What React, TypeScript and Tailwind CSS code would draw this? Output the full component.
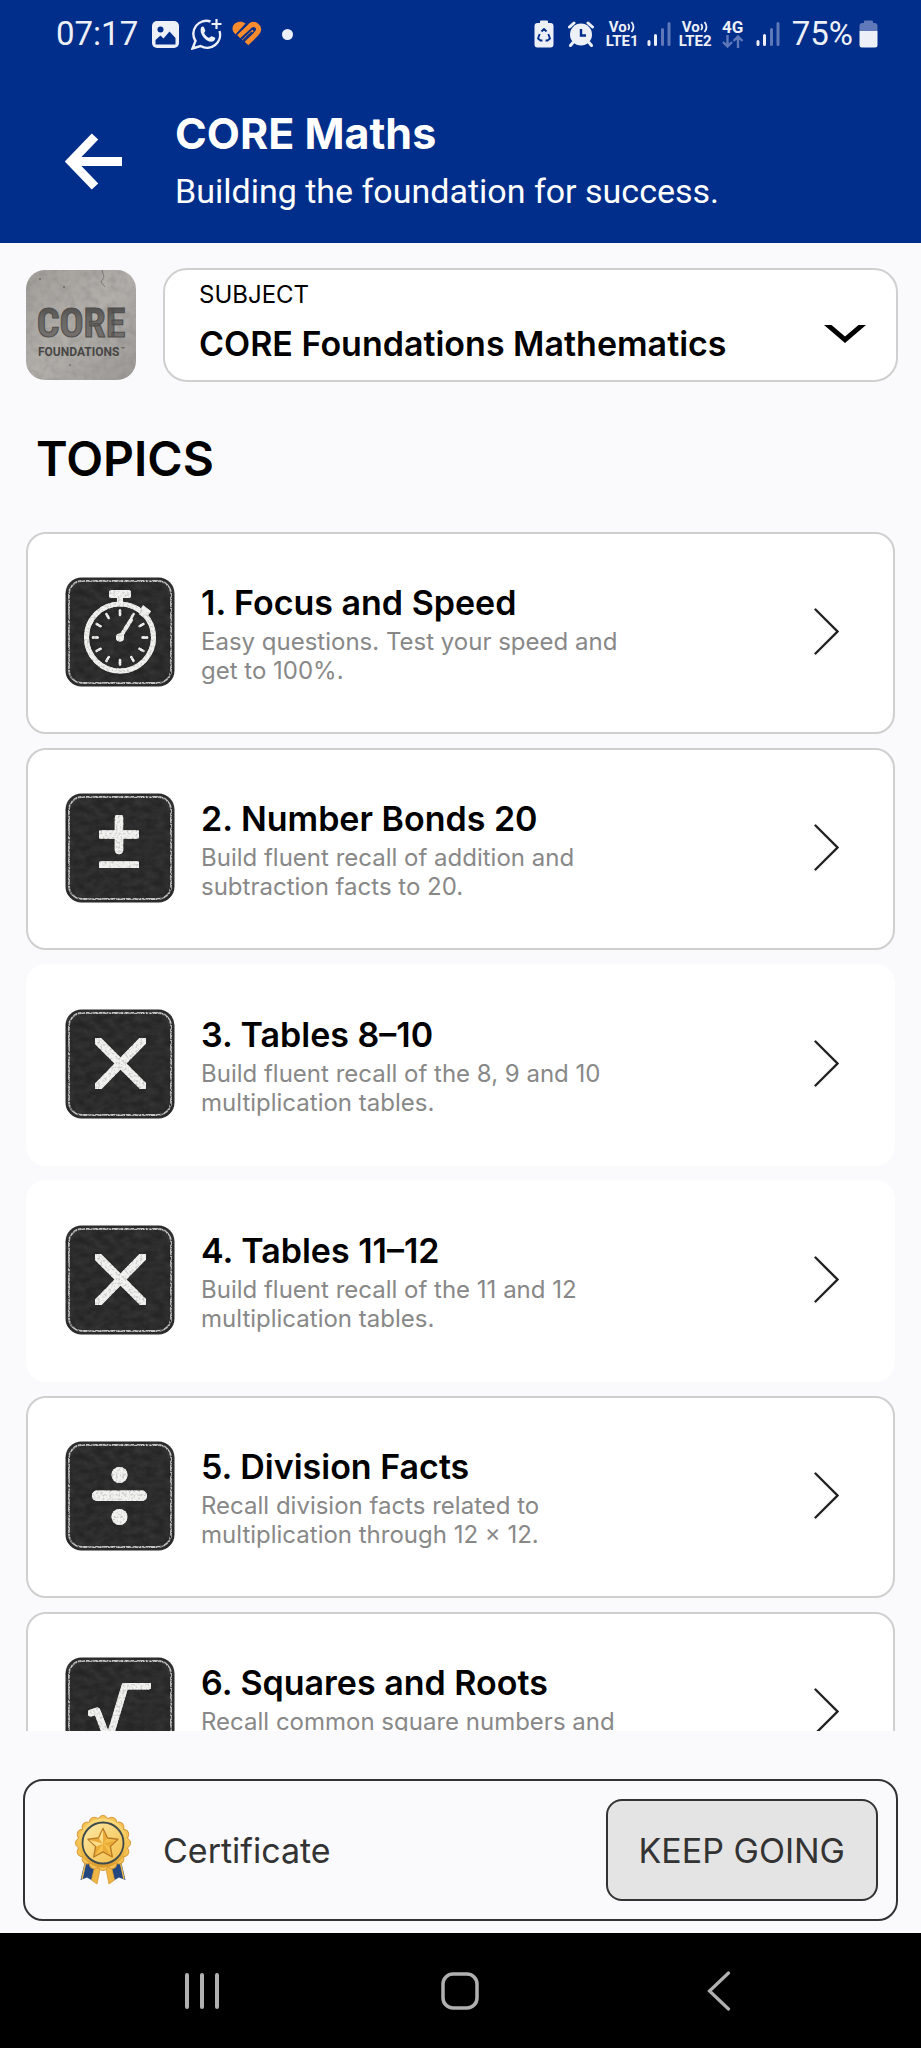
import React from "react";

type IconName = "stopwatch" | "plusminus" | "times" | "divide" | "root";

interface Topic {
  title: string;
  text: string;
  icon: IconName;
  outlined: boolean;
}

const topics: Topic[] = [
  { title: "1. Focus and Speed", text: "Easy questions. Test your speed and get to 100%.", icon: "stopwatch", outlined: true },
  { title: "2. Number Bonds 20", text: "Build fluent recall of addition and subtraction facts to 20.", icon: "plusminus", outlined: true },
  { title: "3. Tables 8–10", text: "Build fluent recall of the 8, 9 and 10 multiplication tables.", icon: "times", outlined: false },
  { title: "4. Tables 11–12", text: "Build fluent recall of the 11 and 12 multiplication tables.", icon: "times", outlined: false },
  { title: "5. Division Facts", text: "Recall division facts related to multiplication through 12 × 12.", icon: "divide", outlined: true },
  { title: "6. Squares and Roots", text: "Recall common square numbers and", icon: "root", outlined: true },
];

/* Shared filters: chalk grain, slate grain and concrete grain */
function Filters() {
  return (
    <svg className="absolute size-0" aria-hidden="true">
      <defs>
        <filter id="chalk" x="-5%" y="-5%" width="110%" height="110%">
          <feTurbulence type="fractalNoise" baseFrequency="0.45" numOctaves="2" seed="4" result="n" />
          <feColorMatrix in="n" type="matrix" values="0 0 0 0 0  0 0 0 0 0  0 0 0 0 0  0 0 0 -4 2.9" result="m" />
          <feComposite in="SourceGraphic" in2="m" operator="in" result="c" />
          <feComponentTransfer in="SourceGraphic" result="base">
            <feFuncA type="linear" slope="0.82" />
          </feComponentTransfer>
          <feMerge>
            <feMergeNode in="base" />
            <feMergeNode in="c" />
          </feMerge>
        </filter>
        <filter id="chalkline" x="-5%" y="-5%" width="110%" height="110%">
          <feTurbulence type="fractalNoise" baseFrequency="0.6" numOctaves="2" seed="9" result="n" />
          <feColorMatrix in="n" type="matrix" values="0 0 0 0 0  0 0 0 0 0  0 0 0 0 0  0 0 0 -3 2.3" result="m" />
          <feComposite in="SourceGraphic" in2="m" operator="in" />
        </filter>
        <filter id="slate" x="0" y="0" width="100%" height="100%">
          <feTurbulence type="fractalNoise" baseFrequency="0.1 0.15" numOctaves="3" seed="2" result="n" />
          <feColorMatrix in="n" type="matrix" values="0 0 0 0 1  0 0 0 0 1  0 0 0 0 1  0.12 0 0 0 -0.03" result="m" />
          <feComposite in="m" in2="SourceGraphic" operator="in" />
        </filter>
        <filter id="concrete" x="0" y="0" width="100%" height="100%">
          <feTurbulence type="fractalNoise" baseFrequency="0.12" numOctaves="4" seed="7" result="n" />
          <feColorMatrix in="n" type="matrix" values="0 0 0 0 0.2  0 0 0 0 0.19  0 0 0 0 0.18  0.7 0 0 0 -0.27" result="m" />
          <feComposite in="m" in2="SourceGraphic" operator="in" />
        </filter>
      </defs>
    </svg>
  );
}

const ticks = [0, 30, 60, 90, 120, 150, 180, 210, 240, 270, 300, 330];

function Glyph({ icon }: { icon: IconName }) {
  switch (icon) {
    case "stopwatch":
      return (
        <g filter="url(#chalk)" stroke="#f2f2f0" fill="none" strokeLinecap="round">
          <circle cx="55" cy="60.500" r="33.500" strokeWidth="5" />
          <rect x="44" y="13" width="22" height="8" rx="2.500" fill="#f2f2f0" stroke="none" />
          <path d="M55 20v8" strokeWidth="6" strokeLinecap="butt" />
          <path d="M76 31l8 6" strokeWidth="7" strokeLinecap="butt" />
          <path d="M76.500 39l4-5" strokeWidth="6" strokeLinecap="butt" />
          {ticks.map((a) => (
            <path key={a} d="M55 33.500v4.500" strokeWidth="2.400" transform={`rotate(${a} 55 60.5)`} />
          ))}
          <path d="M55 60.500L66 43" strokeWidth="3.800" />
          <circle cx="55" cy="60.500" r="4" fill="#f2f2f0" stroke="none" />
        </g>
      );
    case "plusminus":
      return (
        <g filter="url(#chalk)" stroke="#f2f2f0" strokeWidth="8.500" strokeLinecap="round">
          <path d="M54 25V57M36 41.500H72M36 72.500H72" />
        </g>
      );
    case "times":
      return (
        <g filter="url(#chalk)" stroke="#f2f2f0" strokeWidth="8.500" strokeLinecap="round">
          <path d="M33 32L78 77M77.500 32L33.500 77" />
        </g>
      );
    case "divide":
      return (
        <g filter="url(#chalk)">
          <rect x="27" y="49.500" width="55" height="10.500" rx="5" fill="#f2f2f0" />
          <circle cx="54.500" cy="34" r="8" fill="#f2f2f0" />
          <circle cx="54.500" cy="76" r="8" fill="#f2f2f0" />
        </g>
      );
    case "root":
      return (
        <g filter="url(#chalk)" stroke="#f2f2f0" fill="none" strokeWidth="7" strokeLinejoin="round" strokeLinecap="round">
          <path d="M26 56L32 54L43.500 84L60 29H83" />
        </g>
      );
  }
}

function SlateIcon({ icon }: { icon: IconName }) {
  return (
    <svg className="size-[110px] shrink-0" viewBox="0 0 110 110" aria-hidden="true">
      <rect x="0.500" y="0.500" width="109" height="109" rx="16" fill="#242524" />
      <rect x="0.500" y="0.500" width="109" height="109" rx="16" fill="#fff" filter="url(#slate)" />
      <rect x="4" y="4" width="102" height="102" rx="13" fill="none" stroke="#c4c4c2" strokeWidth="1.800" filter="url(#chalkline)" />
      <Glyph icon={icon} />
    </svg>
  );
}

function ConcreteLogo() {
  const condensed = "'Roboto Condensed', 'Liberation Sans Narrow', Roboto, sans-serif";
  return (
    <svg className="size-[110px] shrink-0" viewBox="0 0 110 110" role="img" aria-label="CORE Foundations">
      <defs>
        <linearGradient id="stone" x1="0" y1="0" x2="1" y2="1">
          <stop offset="0" stopColor="#a19e9a" />
          <stop offset="0.500" stopColor="#b2afab" />
          <stop offset="1" stopColor="#9b9895" />
        </linearGradient>
        <linearGradient id="carved" x1="0" y1="0" x2="0" y2="1">
          <stop offset="0" stopColor="#454341" />
          <stop offset="0.400" stopColor="#6a6865" />
          <stop offset="1" stopColor="#777471" />
        </linearGradient>
      </defs>
      <rect width="110" height="110" rx="19" fill="url(#stone)" />
      <rect width="110" height="110" rx="19" fill="#000" filter="url(#concrete)" />
      <path d="M76 0l2 7-3 5 4 5" fill="none" stroke="#6f6c69" strokeWidth="0.800" />
      <circle cx="14" cy="9" r="1.200" fill="#77736f" />
      <circle cx="38" cy="17" r="1.200" fill="#77736f" />
      <circle cx="44" cy="95" r="1" fill="#77736f" />
      <text
        x="55"
        y="67"
        textAnchor="middle"
        fontFamily={condensed}
        fontWeight="700"
        fontSize="40"
        fill="url(#carved)"
        stroke="#4f4d4b"
        strokeWidth="1"
      >
        CORE
      </text>
      <text x="12" y="86" fontFamily="Roboto, sans-serif" fontWeight="700" fontSize="12" fill="#474644">
        FOUNDATIONS
      </text>
      <text x="95" y="81" fontFamily="Roboto, sans-serif" fontWeight="700" fontSize="6" fill="#474644">
        ™
      </text>
    </svg>
  );
}

function Signal() {
  return (
    <svg className="h-[26px] w-[24px]" viewBox="0 0 24 26" strokeWidth="3" strokeLinecap="round" aria-hidden="true">
      <path d="M2 20.500V23.500M8.500 14.500V23.500" stroke="#eef0f8" />
      <path d="M15.500 8.500V23.500M22 2.500V23.500" stroke="#5f78b8" />
    </svg>
  );
}

function VoLte({ line }: { line: string }) {
  return (
    <span className="flex w-[33px] flex-col items-center text-[15px] leading-[14px] font-bold whitespace-nowrap">
      <span className="flex items-center">
        Vo
        <svg className="h-[14px] w-[9px]" viewBox="0 0 9 14" fill="none" stroke="#eef0f8" strokeWidth="1.800" aria-hidden="true">
          <path d="M1 4q2.500 3 0 6M4.500 2q4 5 0 10" />
        </svg>
      </span>
      <span>{line}</span>
    </span>
  );
}

function StatusBar() {
  return (
    <div className="flex h-[68px] items-center pr-[43px] pl-[56px] font-[Roboto,sans-serif] text-[#eef0f8]">
      <span className="text-[33px] leading-[40px]">07:17</span>
      <svg className="ml-3.5 size-[27px]" viewBox="0 0 27 27" aria-hidden="true">
        <rect width="27" height="27" rx="5" fill="#eef0f8" />
        <circle cx="8.500" cy="8.500" r="3" fill="#002e8a" />
        <path d="M3.500 23.500V19L8.500 14.500L11.500 17.500L17.500 10.500L23.500 17V23.500Z" fill="#002e8a" />
      </svg>
      <svg className="ml-3 h-[32px] w-[31px]" viewBox="0 0 31 32" fill="none" stroke="#eef0f8" strokeWidth="2.400" aria-hidden="true">
        <path d="M19.500 3.500A13 13 0 0 0 4.500 23L1.500 30.500L9.500 28A13 13 0 0 0 28.500 13" />
        <path d="M25.500 1v10M20.500 6h10" strokeWidth="2.200" />
        <path d="M10 9.500c1.500-1.800 3-.8 3.300.5l1 2.500c.2 1-1.500 2-1 3 1 2 2.500 3.300 4.500 4.200 1 .3 2-1.700 3-1.500l3 1.300c1 .5.3 2.500-1 3.500-5 3.500-15.500-6-12.800-13.500z" fill="#eef0f8" stroke="none" />
      </svg>
      <svg className="ml-2.5 h-[26px] w-[30px]" viewBox="0 0 30 26" aria-hidden="true">
        <path d="M13.500 2.500C9 -1 1.500 .500 .500 7C.300 9.500 1.500 11.500 3.500 13.500Z" fill="#f98b2e" />
        <path d="M6.500 15.500L18.500 4.500C22 1.500 28.500 5.500 26 10.500C24 14 19 18 14.500 22.500" fill="none" stroke="#f98b2e" strokeWidth="5" />
        <path d="M10.500 19.500L21 9.500" fill="none" stroke="#f98b2e" strokeWidth="2" />
        <path d="M10 20.500L20 11" fill="none" stroke="#002e8a" strokeWidth="1.600" />
        <path d="M4 14L15 3.500" fill="none" stroke="#002e8a" strokeWidth="1.400" />
      </svg>
      <span className="ml-5 size-[11px] rounded-full bg-[#eef0f8]" />

      <div className="ml-auto flex items-center">
        <svg className="h-[28px] w-[20px]" viewBox="0 0 20 28" aria-hidden="true">
          <path d="M6 3V1.500Q6 .5 7 .5H13Q14 .5 14 1.500V3H16.500Q19.500 3 19.500 6V24.500Q19.500 27.500 16.500 27.500H3.500Q.5 27.500 .5 24.500V6Q.5 3 3.500 3Z" fill="#eef0f8" />
          <path d="M7.500 11.500L10 9L12.500 11.500M14.300 14L16 18.500L13.500 20.500H11.500M8.500 20.500H6.500L4 18.500L5.700 14" fill="none" stroke="#002e8a" strokeWidth="1.900" strokeLinejoin="round" />
        </svg>
        <svg className="ml-3.5 h-[26px] w-[26px]" viewBox="0 0 26 26" aria-hidden="true">
          <circle cx="13" cy="13.500" r="11" fill="#eef0f8" />
          <path d="M1.500 6L6 2M24.500 6L20 2M5 21.500L2.500 24.500M21 21.500L23.500 24.500" stroke="#eef0f8" strokeWidth="3" strokeLinecap="round" />
          <path d="M13 8V14.500H18" fill="none" stroke="#002e8a" strokeWidth="2.400" />
        </svg>
        <span className="ml-3"><VoLte line="LTE1" /></span>
        <span className="ml-2"><Signal /></span>
        <span className="ml-2"><VoLte line="LTE2" /></span>
        <span className="ml-2.5 flex flex-col items-center text-[17px] leading-[15px] font-bold">
          4G
          <svg className="h-[13px] w-[22px]" viewBox="0 0 22 13" fill="none" stroke="#5f78b8" strokeWidth="2.400" aria-hidden="true">
            <path d="M5.500 0V11M1 7L5.500 11.500L10 7M16 13V2M11.500 6L16 1.500L20.500 6" />
          </svg>
        </span>
        <span className="ml-3"><Signal /></span>
        <span className="ml-3 text-[33px] leading-[40px]">75%</span>
        <svg className="ml-1.5 h-[28px] w-[19px]" viewBox="0 0 19 28" aria-hidden="true">
          <path d="M5 3V1.500Q5 .5 6 .5H13Q14 .5 14 1.500V3H15.500Q18.500 3 18.500 6V11H.5V6Q.5 3 3.500 3Z" fill="#6079b9" />
          <path d="M.5 11H18.500V25Q18.500 27.500 16 27.500H3Q.5 27.500 .5 25Z" fill="#eef0f8" />
        </svg>
      </div>
    </div>
  );
}

function Medal() {
  const petals = Array.from({ length: 16 }, (_, i) => i * 22.5);
  return (
    <svg className="h-[70px] w-[60px] shrink-0" viewBox="0 0 60 70" aria-hidden="true">
      <defs>
        <linearGradient id="gold" x1="0" y1="0" x2="0" y2="1">
          <stop offset="0" stopColor="#fbdc7c" />
          <stop offset="0.600" stopColor="#f3c04c" />
          <stop offset="1" stopColor="#dc9a2c" />
        </linearGradient>
        <linearGradient id="face" x1="0" y1="0" x2="1" y2="1">
          <stop offset="0" stopColor="#fdeaa6" />
          <stop offset="1" stopColor="#f2bd48" />
        </linearGradient>
      </defs>
      <path d="M12 46L7.500 65L14 62.500L20 66L24 50Z" fill="#25477f" />
      <path d="M48 46L52.500 65L46 62.500L40 66L36 50Z" fill="#25477f" />
      <path d="M12.500 48L9 64M47.500 48L51 64" stroke="#e9b850" strokeWidth="1.500" />
      <path d="M22 50L18.500 65L24 69L27.500 52ZM38 50L41.500 65L36 69L32.500 52Z" fill="#efb545" stroke="#d99a35" strokeWidth="0.800" />
      <g fill="#f3c355" stroke="#d99a3a" strokeWidth="1">
        {petals.map((a) => (
          <circle key={a} cx="30" cy="5.500" r="5" transform={`rotate(${a} 30 28)`} />
        ))}
      </g>
      <circle cx="30" cy="28" r="24.500" fill="url(#gold)" />
      <circle cx="30" cy="28" r="20.500" fill="url(#face)" stroke="#3f4a4d" strokeWidth="1.800" />
      <path d="M30 13.500L34.500 23L45 24.300L37.300 31.500L39.300 42L30 36.800L20.700 42L22.700 31.500L15 24.300L25.500 23Z" fill="#f6c24b" stroke="#b87a26" strokeWidth="1.400" strokeLinejoin="round" />
      <path d="M30 28.500L30 14.500L34 23.500ZM30 28.500L44 25L36.500 31.500ZM30 28.500L38.500 41L30 36ZM30 28.500L21.500 41L23.500 31.500ZM30 28.500L16 25L26 23.500Z" fill="#e39b2b" opacity="0.600" />
      <path d="M30 28.500L30 14.500L26 23.500ZM30 28.500L23.500 31.500L16 25Z" fill="#fde49a" opacity="0.800" />
    </svg>
  );
}

export default function App() {
  return (
    <div className="flex h-screen flex-col bg-[#fafafc] font-[Inter,sans-serif] text-black">
      <Filters />
      <header className="bg-[#002e8a] text-white">
        <StatusBar />
        <div className="flex items-center gap-[53px] pt-[39px] pr-6 pb-8 pl-[65px]">
          <button type="button" aria-label="Back" className="shrink-0 pt-1">
            <svg className="h-[57px] w-[57px]" viewBox="0 0 57 57" fill="none" stroke="#fff" strokeWidth="9" aria-hidden="true">
              <path d="M57 28.500H9M30 3.500L6 28.500L30 53.500" />
            </svg>
          </button>
          <div className="flex flex-col gap-3">
            <h1 className="text-[43px] leading-[52px] font-bold">CORE Maths</h1>
            <p className="font-[Roboto,sans-serif] text-[34px] leading-[40px]">Building the foundation for success.</p>
          </div>
        </div>
      </header>

      <main className="flex min-h-0 flex-1 flex-col pt-[25px]">
        <div className="flex items-center gap-[27px] pr-[23px] pl-[26px]">
          <ConcreteLogo />
          <div className="relative min-w-0 flex-1 rounded-3xl border-2 border-[#cfcfcf] bg-white pt-[11px] pb-4 pl-[34px]">
            <label htmlFor="subject" className="block text-[24px] leading-[28px]">
              SUBJECT
            </label>
            <select id="subject" className="mt-[15px] block w-full appearance-none bg-transparent text-[34px] leading-[40px] font-semibold outline-none">
              <option>CORE Foundations Mathematics</option>
            </select>
            <svg className="pointer-events-none absolute top-[55px] right-[30px] h-[18px] w-[42px]" viewBox="0 0 42 18" aria-hidden="true">
              <path d="M0 0H7.500L21 11.500L34.500 0H42L21 18Z" fill="#000" />
            </svg>
          </div>
        </div>

        <h2 className="mt-12 pl-9 text-[48px] leading-[58px] font-semibold">TOPICS</h2>

        <ul className="mt-11 flex min-h-0 flex-1 flex-col gap-[14px] overflow-y-auto px-[26px] [scrollbar-width:none]">
          {topics.map((t) => (
            <li key={t.title} className="shrink-0">
              <button
                type="button"
                className={
                  "flex w-full items-center rounded-[20px] border-2 bg-white pt-[43px] pb-[45px] pr-[54px] pl-[37px] text-left " +
                  (t.outlined ? "border-[#cfcfcf]" : "border-white")
                }
              >
                <SlateIcon icon={t.icon} />
                <span className="ml-[26px] flex h-[98px] max-w-[440px] flex-col gap-1">
                  <span className="text-[34px] leading-[40px] font-semibold">{t.title}</span>
                  <span className="text-[24px] leading-[29px] text-[#888888]">{t.text}</span>
                </span>
                <svg className="ml-auto h-[48px] w-[25px] shrink-0" viewBox="0 0 25 48" fill="none" stroke="#222" strokeWidth="2.400" strokeLinecap="round" aria-hidden="true">
                  <path d="M1.500 1.500L23.500 23.500L1.500 45.500" />
                </svg>
              </button>
            </li>
          ))}
        </ul>
      </main>

      <footer>
        <div className="px-[23px] pt-12 pb-3">
          <div className="flex items-center rounded-[20px] border-2 border-[#333333] py-[18px] pr-[18px] pl-12">
            <Medal />
            <span className="ml-[30px] pt-0.5 text-[34px] leading-[40px] text-[#333333]">Certificate</span>
            <button type="button" className="ml-auto rounded-2xl border-2 border-[#333333] bg-[#e4e4e4] px-[31px] pt-[30px] pb-7 text-[34px] leading-[40px] text-[#333333]">
              KEEP GOING
            </button>
          </div>
        </div>
        <nav className="grid h-[115px] grid-cols-3 items-center justify-items-center bg-black px-[73px]">
          <button type="button" aria-label="Recent apps">
            <svg className="h-[38px] w-[36px]" viewBox="0 0 36 38" stroke="#b0b0b0" strokeWidth="4" strokeLinecap="round" aria-hidden="true">
              <path d="M3 3V35M18 3V35M33 3V35" />
            </svg>
          </button>
          <button type="button" aria-label="Home">
            <svg className="h-[38px] w-[38px]" viewBox="0 0 38 38" fill="none" stroke="#b0b0b0" strokeWidth="3.500" aria-hidden="true">
              <rect x="2" y="2" width="34" height="34" rx="10" />
            </svg>
          </button>
          <button type="button" aria-label="Back">
            <svg className="h-[40px] w-[24px]" viewBox="0 0 24 40" fill="none" stroke="#b0b0b0" strokeWidth="3.200" strokeLinecap="round" aria-hidden="true">
              <path d="M21.500 2L2.500 20L21.500 38" />
            </svg>
          </button>
        </nav>
      </footer>
    </div>
  );
}
